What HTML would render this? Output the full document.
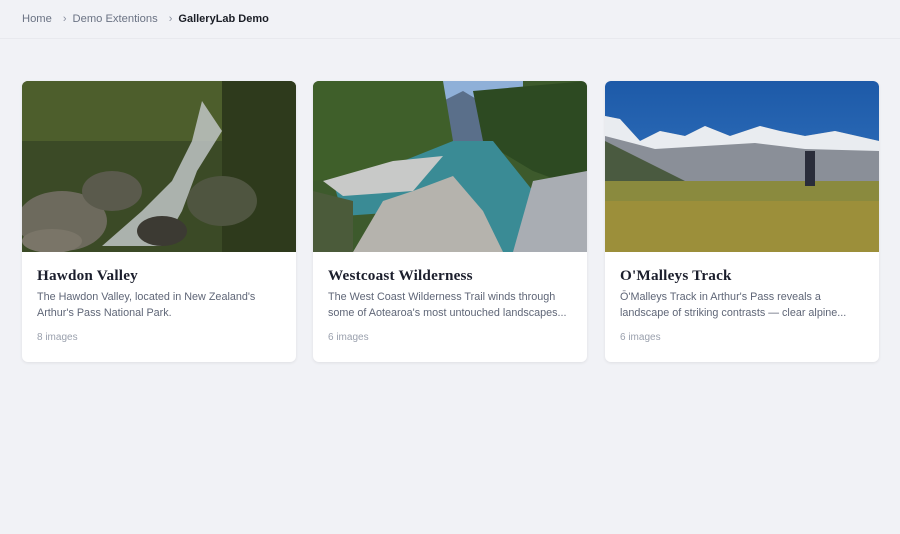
<!DOCTYPE html>
<html><head><meta charset="utf-8"><style>
*{margin:0;padding:0;box-sizing:border-box}
body{width:900px;height:534px;background:#f1f2f6;font-family:"Liberation Sans",sans-serif;overflow:hidden;position:relative}
.bc{position:absolute;top:11px;left:22px;font-size:11.2px;color:#6b7384;display:flex;align-items:center;height:16px}
.bc .s{margin:0 6px 0 11px;font-size:11px;color:#8a90a0}
.bc b{color:#1b1e26;font-weight:bold;font-size:11px}
.line{position:absolute;top:38px;left:0;width:900px;height:1px;background:#e8e9ee}
.card{position:absolute;top:81px;width:274px;height:281px;background:#fff;border-radius:6px;overflow:hidden;box-shadow:0 1px 3px rgba(0,0,0,.08)}
.card svg{display:block;width:274px;height:171px}
.t{position:absolute;left:15px;top:186px;font-family:"Liberation Serif",serif;font-weight:bold;font-size:15.2px;color:#1b1e2c;letter-spacing:.2px}
.d{position:absolute;left:15px;top:208px;width:250px;font-size:10.8px;line-height:16px;color:#5f6677}
.n{position:absolute;left:15px;top:251px;font-size:10px;color:#9aa0ad}
</style></head><body>
<div class="bc">Home<span class="s">›</span>Demo Extentions<span class="s">›</span><b>GalleryLab Demo</b></div>
<div class="line"></div>

<div class="card" style="left:22px">
<svg viewBox="0 0 274 171"><rect width="274" height="171" fill="#3b4a26"/>
<rect x="0" y="0" width="274" height="60" fill="#4d5e2c"/>
<rect x="200" y="0" width="74" height="171" fill="#2e3a1c"/>
<ellipse cx="40" cy="140" rx="45" ry="30" fill="#6d6a5d"/>
<ellipse cx="90" cy="110" rx="30" ry="20" fill="#5a5a4c"/>
<ellipse cx="200" cy="120" rx="35" ry="25" fill="#4f5540"/>
<path d="M180 20 L170 60 L150 100 L120 130 L80 165 L140 165 L160 130 L175 90 L200 50 Z" fill="#c8ccd0" opacity=".8"/>
<ellipse cx="140" cy="150" rx="25" ry="15" fill="#3c3a33"/>
<ellipse cx="30" cy="160" rx="30" ry="12" fill="#7a7568"/>
</svg>
<div class="t">Hawdon Valley</div>
<div class="d">The Hawdon Valley, located in New Zealand's Arthur's Pass National Park.</div>
<div class="n">8 images</div></div>

<div class="card" style="left:313px">
<svg viewBox="0 0 274 171"><rect width="274" height="171" fill="#3d5a2c"/>
<rect x="125" y="0" width="85" height="45" fill="#8fb0d8"/>
<path d="M130 20 L150 10 L175 25 L175 60 L130 60 Z" fill="#5a6f8a"/>
<path d="M0 0 L130 0 L140 60 L150 80 L0 100 Z" fill="#3f5f2a"/>
<path d="M160 10 L274 0 L274 110 L220 90 L170 60 Z" fill="#2d4a22"/>
<path d="M140 60 L180 60 L220 110 L230 171 L150 171 L100 130 L30 135 L20 100 L90 80 Z" fill="#3a8b95"/>
<path d="M10 100 L80 80 L130 75 L100 110 L30 115 Z" fill="#c8c9c8"/>
<path d="M40 171 L70 120 L100 110 L140 95 L170 130 L190 171 Z" fill="#b5b3ad"/>
<path d="M220 100 L274 90 L274 171 L200 171 Z" fill="#a9adb3"/>
<path d="M0 110 L40 120 L40 171 L0 171Z" fill="#4b5b3a"/>
</svg>
<div class="t">Westcoast Wilderness</div>
<div class="d">The West Coast Wilderness Trail winds through some of Aotearoa's most untouched landscapes...</div>
<div class="n">6 images</div></div>

<div class="card" style="left:605px">
<svg viewBox="0 0 274 171"><defs><linearGradient id="sk" x1="0" y1="0" x2="0" y2="1"><stop offset="0" stop-color="#1d5aa8"/><stop offset="1" stop-color="#3b7cc7"/></linearGradient></defs>
<rect width="274" height="171" fill="url(#sk)"/>
<path d="M0 35 L15 38 L35 60 L55 50 L80 55 L100 45 L125 55 L155 45 L175 50 L200 55 L230 50 L274 60 L274 105 L0 105 Z" fill="#8a8f98"/>
<path d="M0 35 L15 38 L35 60 L55 50 L80 55 L100 45 L125 55 L155 45 L175 50 L200 55 L230 50 L274 60 L274 70 L200 68 L150 62 L100 65 L50 68 L0 55Z" fill="#e9ecf0"/>
<path d="M0 60 L40 80 L80 100 L0 105Z" fill="#4a5a40"/>
<rect x="0" y="100" width="274" height="71" fill="#8a8a3e"/>
<rect x="0" y="120" width="274" height="51" fill="#9c8f3a"/>
<rect x="200" y="70" width="10" height="35" fill="#2a2d3a"/>
</svg>
<div class="t">O'Malleys Track</div>
<div class="d">Ō'Malleys Track in Arthur's Pass reveals a landscape of striking contrasts — clear alpine...</div>
<div class="n">6 images</div></div>
</body></html>
